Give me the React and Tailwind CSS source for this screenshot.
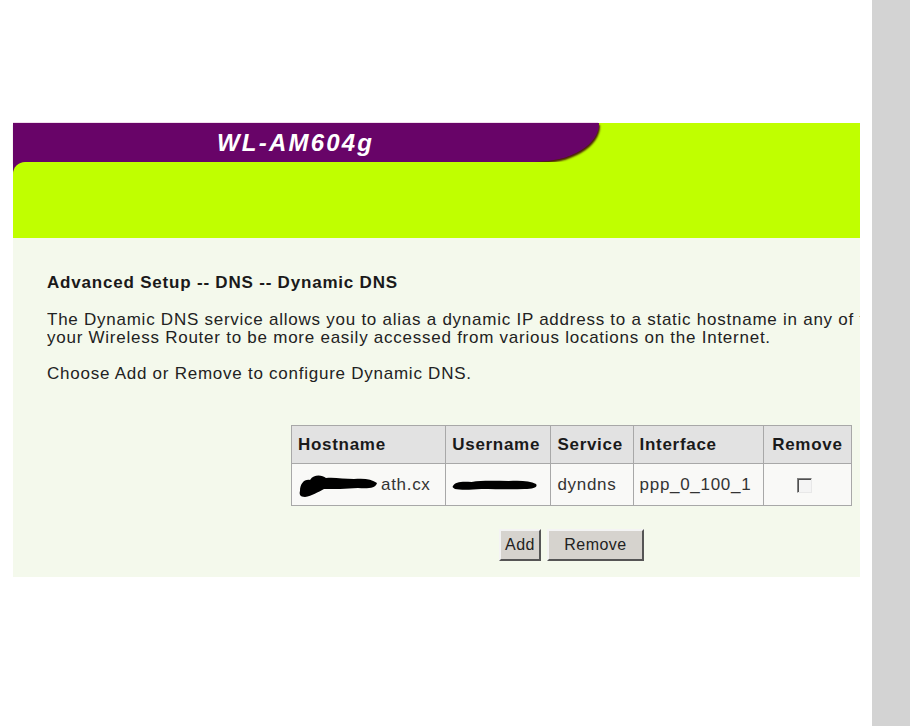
export default function App() {
  const cell = "border border-[#a8a8a8] px-[6px]";
  return (
    <div className="flex w-[910px] h-[726px] bg-white" style={{ fontFamily: '"Liberation Sans", Arial, sans-serif' }}>
      <div className="flex flex-col w-[872px] pl-[13px] pr-[12px] pt-[122px]">
        <div className="h-[1px] bg-[#f0dcec] w-[585px]" />
        {/* header */}
        <div className="flex h-[39px] bg-[#c0ff00]">
          <div className="w-[586px] bg-[#680468] rounded-br-[64px_38px] shadow-[1px_2px_2px_#4a2008] flex items-center pl-[204px]">
            <span className="text-white font-bold italic text-[24px] tracking-[2.2px]">WL-AM604g</span>
          </div>
        </div>
        <div className="h-[76px] bg-[linear-gradient(90deg,#680468_0,#680468_20px,#c0ff00_20px)]">
          <div className="h-full bg-[#c0ff00] rounded-tl-[12px]" />
        </div>
        {/* content */}
        <div className="flex flex-col bg-[#f4f9ec] h-[339px] pl-[34px] pt-[35px] text-[#1a1a1a]">
          <div className="font-bold text-[17px] leading-[19px] tracking-[0.8px]">Advanced Setup -- DNS -- Dynamic DNS</div>
          <div className="mt-[19px] text-[17px] leading-[18px] tracking-[0.75px] whitespace-nowrap overflow-hidden text-[#222]">
            <div>The Dynamic DNS service allows you to alias a dynamic IP address to a static hostname in any of the many domains, allowing</div>
            <div>your Wireless Router to be more easily accessed from various locations on the Internet.</div>
          </div>
          <div className="mt-[18px] text-[17px] leading-[18px] tracking-[0.75px] text-[#222]">Choose Add or Remove to configure Dynamic DNS.</div>
          <div className="ml-[244px] mt-[42px] w-[561px] flex flex-col items-center">
            <table className="border-collapse w-[561px] text-[17px] tracking-[0.7px] border border-[#8a8a8a]">
              <thead>
                <tr className="h-[38px] bg-[#e2e2e2] font-bold">
                  <td className={`${cell} text-left w-[154px]`}>Hostname</td>
                  <td className={`${cell} text-left w-[105px]`}>Username</td>
                  <td className={`${cell} text-left w-[82px]`}>Service</td>
                  <td className={`${cell} text-left w-[130px]`}>Interface</td>
                  <td className={`${cell} text-center w-[88px]`}>Remove</td>
                </tr>
              </thead>
              <tbody>
                <tr className="h-[42px] bg-[#f9f9f7] text-[#333]">
                  <td className={`${cell} text-left px-[4px]`}>
                    <div className="flex items-center gap-[3px]">
                      <svg width="80" height="26" viewBox="0 0 80 26" className="shrink-0">
                        <path d="M2 19 C2 12 6 7 12 8 C16 2 24 3 28 6 C36 5 46 7 56 7 C66 6 74 7 79 11 C78 16 70 17 60 16 C48 17 36 17 26 17 C20 20 14 24 7 25 C2 25 1 22 2 19 Z" fill="#000" />
                      </svg>
                      <span>ath.cx</span>
                    </div>
                  </td>
                  <td className={`${cell} text-left px-[3px]`}>
                    <svg width="86" height="14" viewBox="0 0 88 14" className="block">
                      <path d="M1 8 C3 4 10 3 20 4 C32 2 46 3 58 3 C70 2 80 3 86 6 C88 9 84 11 74 11 C60 12 44 11 30 11 C18 12 8 12 3 11 C1 10 0 9 1 8 Z" fill="#000" />
                    </svg>
                  </td>
                  <td className={`${cell} text-left`}>dyndns</td>
                  <td className={`${cell} text-left`}>ppp_0_100_1</td>
                  <td className={`${cell} text-center`}>
                    <span className="inline-block w-[15px] h-[15px] mr-[6px] bg-[#f4f4f4] border border-t-[#808080] border-l-[#808080] border-b-[#e8e8e8] border-r-[#e8e8e8] shadow-[inset_1px_1px_0_#505050] align-middle" />
                  </td>
                </tr>
              </tbody>
            </table>
            <div className="flex gap-[6px] mt-[23px]">
              <button className="h-[32px] px-[4px] bg-[#d6d3ce] text-[16px] tracking-[0.5px] text-[#222] border-2 border-t-[#f4f4f4] border-l-[#f4f4f4] border-b-[#555] border-r-[#555]">Add</button>
              <button className="h-[32px] w-[97px] bg-[#d6d3ce] text-[16px] tracking-[0.5px] text-[#222] border-2 border-t-[#f4f4f4] border-l-[#f4f4f4] border-b-[#555] border-r-[#555]">Remove</button>
            </div>
          </div>
        </div>
      </div>
      <div className="w-[38px] h-full bg-[#d3d3d3]" />
    </div>
  );
}
